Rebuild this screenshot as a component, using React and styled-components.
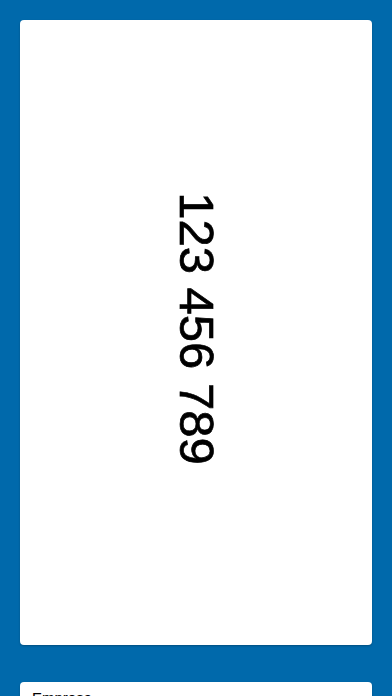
import React from 'react'
import styled, { createGlobalStyle } from 'styled-components'

const GlobalStyle = createGlobalStyle`
  html, body {
    margin: 0;
    padding: 0;
    background: #0069ab;
    font-family: "Liberation Sans", Arial, sans-serif;
    overflow: hidden;
  }
`

const App = () =>
  <Page>
    <GlobalStyle />
    <CodeCard>
      <RotatedCode>123 456 789</RotatedCode>
    </CodeCard>
    <InfoCard>
      <Label>Empresa</Label>
    </InfoCard>
  </Page>

export default App

const Page = styled.div`
  display: flex;
  flex-direction: column;
  gap: 37px;
  padding: 20px;
  height: 696px;
  box-sizing: border-box;
`

const Card = styled.div`
  background: #ffffff;
  border-radius: 4px;
  box-shadow: 0 1px 2px rgba(0, 0, 0, 0.25);
  flex-shrink: 0;
`

const CodeCard = styled(Card)`
  height: 625px;
  display: flex;
  align-items: center;
  justify-content: center;
  overflow: hidden;
`

const RotatedCode = styled.div`
  transform: rotate(90deg);
  white-space: nowrap;
  font-size: 49px;
  color: #000000;
  line-height: 1;
  margin-top: -9px;
  -webkit-text-stroke: 0.7px #000000;
`

const InfoCard = styled(Card)`
  padding: 7px 12px;
  height: 80px;
`

const Label = styled.div`
  font-size: 15px;
  color: #000000;
`
